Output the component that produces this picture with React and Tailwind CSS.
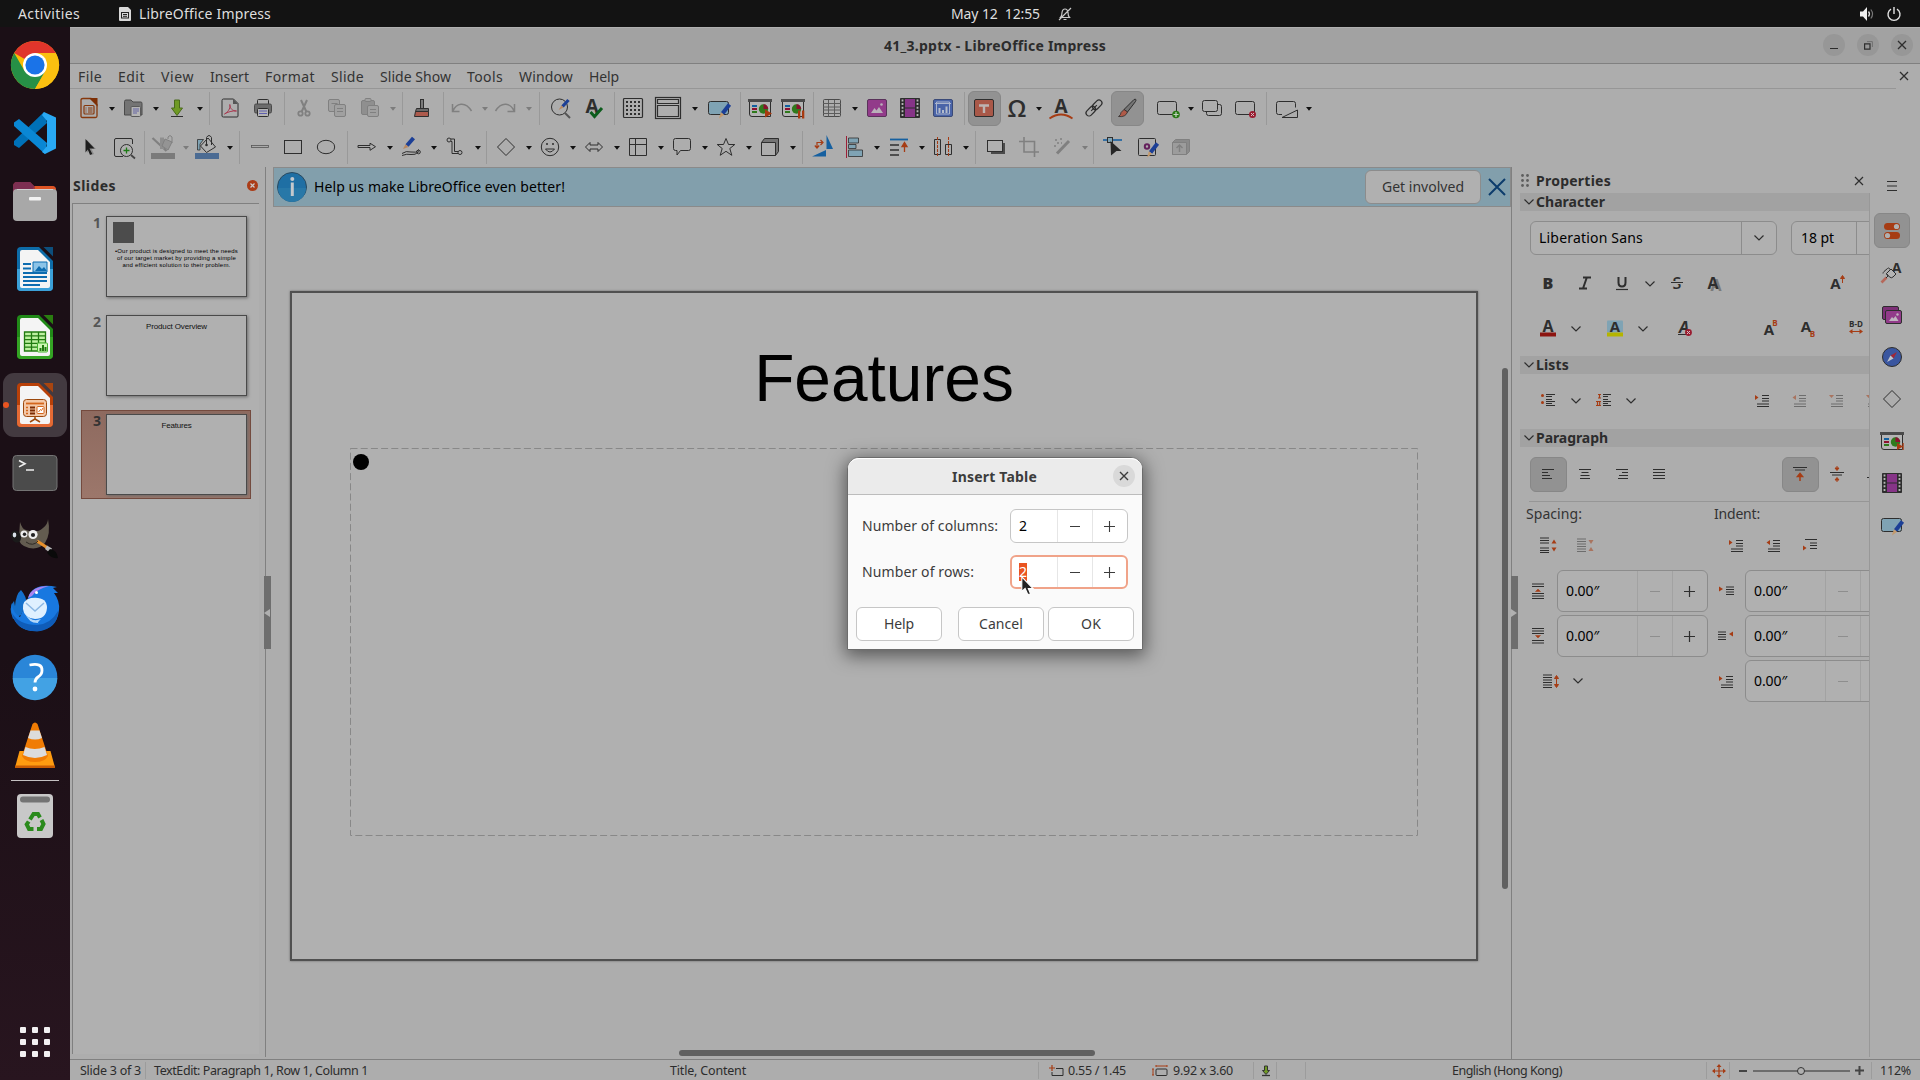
import React, { useLayoutEffect, useRef } from "react";

const K = "#2e2e2e";
const G = "#808080";
const O = "#a63c14";
const B = "#7fa3b4";

/* Single-line text tracked to fill an exact advance width. */
function Fit({ w, children, className = "" }) {
  const ref = useRef(null);
  useLayoutEffect(() => {
    const el = ref.current;
    el.style.letterSpacing = "0px";
    const natural = el.getBoundingClientRect().width;
    el.style.letterSpacing = (w - natural) / String(children).length + "px";
  }, [w, children]);
  return (
    <span className={"block shrink-0 whitespace-pre " + className} style={{ width: w }}>
      <span ref={ref} className="inline-block">{children}</span>
    </span>
  );
}

function Ic({ s = 24, w, h, children, className = "" }) {
  const ww = w || s;
  const hh = h || s;
  return (
    <svg width={ww} height={hh} viewBox={`0 0 ${ww} ${hh}`} fill="none" className={"block shrink-0 overflow-visible " + className}>
      {children}
    </svg>
  );
}

const Glyph = ({ x = 12, y = 18, size = 16, fill = K, children, ...p }) => (
  <text x={x} y={y} fontSize={size} fill={fill} fontWeight="700" textAnchor="middle" fontFamily="'Open Sans','Liberation Sans',sans-serif" {...p}>
    {children}
  </text>
);

const Pencil = ({ t }) => (
  <g transform={t}>
    <path d="M11 0 L4 9" stroke="#1c3f96" strokeWidth="4" />
    <path d="M2.4 7.8 L5.6 10.2 L0.5 14 Z" fill="#c49a6c" />
  </g>
);

const Show = ({ children }) => (
  <>
    <path d="M1.500 5V18q0 2.500 2.500 2.500H22.500V5" stroke={K} fill="#b4b4b4" />
    <path d="M0 3h24v3H0z" fill="#4a4a4a" />
    <path d="M4 9h5v2H4z" fill="#1260a0" />
    <path d="M4 12h5v2H4z" fill="#8c1030" />
    <path d="M4 15h5v2H4z" fill="#2f7a1c" />
    <circle cx="15.500" cy="13" r="4.700" fill="#2f7a1c" />
    <path d="M15.500 13V8.300A4.700 4.700 0 0 1 20.200 13Z" fill="#8c1030" />
    {children}
  </>
);

const film = (
  <>
    <path d="M2.500 2.500h19v19H2.500z" fill="#2c2c2c" stroke={K} />
    <path d="M7 3h10v8.400H7zM7 12.600h10V21H7z" fill="#863487" />
    <path d="M4.500 3.500v18M19.500 3.500v18" stroke="#b5b5b5" strokeWidth="1.800" strokeDasharray="2 1.600" />
  </>
);

const note = (
  <>
    <rect x="1.500" y="5.500" width="20" height="13" rx="2" fill={B} stroke={K} />
    <Pencil t="translate(11.500,8.500)" />
  </>
);

const ICONS = {
  new: (
    <>
      <path d="M6 2.500h8l6 6V20q0 1.500-1.500 1.500h-13Q4 21.500 4 20V4q0-1.500 2-1.500z" stroke="#86380c" strokeWidth="1.300" />
      <path d="M12 2h8.500v8.500z" fill="#7d2f05" />
      <rect x="7" y="9.500" width="10" height="8.500" rx="1" stroke="#86380c" strokeWidth="1.200" />
      <path d="M8.500 12h1M11 12h4.500M8.500 14h1M11 14h4.500M8.500 16h1M11 16h4.500" stroke="#86380c" />
    </>
  ),
  open: (
    <>
      <path d="M3.500 19V5.500q0-1.500 1.500-1.500h5l2 2h8q1 0 1 1.500V19z" fill="#747474" stroke="#4a4a4a" />
      <rect x="10" y="10.500" width="9.500" height="10" rx="1" fill="#b4b4b4" stroke="#5a5a5a" />
      <path d="M12 13h6M12 15h6M12 17h4" stroke="#6464a4" />
    </>
  ),
  save: (
    <>
      <path d="M9.500 4h5v8h3L12 19.500 6.500 12h3z" fill="#6f9a24" stroke="#4a6a1c" />
      <path d="M6 20.500h12" stroke={K} />
    </>
  ),
  pdf: (
    <>
      <path d="M5.500 3h10l4.500 4.500V20q0 1-1 1H5.500q-1.500 0-1.500-1V4.500Q4 3 5.500 3z" stroke={K} />
      <path d="M15 3l5 5h-5z" fill="#555" />
      <path d="M6.500 18c5-3 6-7 5.300-9.500 0 4 2.700 6.500 6.700 6.500-4-.5-9 1-12 3z" stroke="#a83a50" />
    </>
  ),
  print: (
    <>
      <path d="M6.500 8V4.500q0-1 1-1h9q1 0 1 1V8" stroke={K} />
      <rect x="3.500" y="8" width="17" height="9" rx="1.500" fill="#6c6c6c" stroke="#4a4a4a" />
      <rect x="6.500" y="12.500" width="11" height="8" rx="1" fill="#b4b4b4" stroke={K} />
      <path d="M8 15h8M8 17.500h8" stroke="#6060b0" />
    </>
  ),
  cut: (
    <>
      <path d="M9 4l5.500 12M15 4L9.500 16" stroke={G} strokeWidth="2" />
      <circle cx="8.500" cy="17.500" r="2.200" stroke={G} strokeWidth="1.800" />
      <circle cx="15.500" cy="17.500" r="2.200" stroke={G} strokeWidth="1.800" />
    </>
  ),
  copy: (
    <>
      <rect x="3.500" y="3.500" width="11" height="12" rx="1.500" fill="#a0a0a0" stroke={G} />
      <rect x="9.500" y="8.500" width="11" height="12" rx="1.500" fill="#a0a0a0" stroke={G} />
      <path d="M12 12.500h6M12 15.500h6M6.500 7.500h6" stroke={G} />
    </>
  ),
  paste: (
    <>
      <rect x="3.500" y="4.500" width="13" height="14" rx="1.500" fill="#8f8f8f" stroke={G} />
      <rect x="7" y="2.500" width="6" height="3" rx="1" fill="#a0a0a0" stroke={G} />
      <rect x="9.500" y="9.500" width="11" height="11" rx="1.500" fill="#a0a0a0" stroke={G} />
      <path d="M12 13.500h6M12 16.500h6" stroke={G} />
    </>
  ),
  clone: (
    <>
      <rect x="10.500" y="3.500" width="3" height="9" fill="#7a7a7a" stroke={K} />
      <path d="M6.500 12.500h12v3h-13z" fill="#6a6a6a" stroke={K} />
      <path d="M5.500 15.500h13v5H4.500z" fill="#ac5a4c" stroke={K} />
    </>
  ),
  undo: <path d="M2.500 8v7.500h7M3 15C6 7.500 15 4.500 21.500 15" stroke={G} strokeWidth="1.500" />,
  redo: <path d="M20.500 8v7.500h-7M20 15C17 7.500 8 4.500 1.500 15" stroke={G} strokeWidth="1.500" />,
  find: (
    <>
      <circle cx="11.500" cy="11" r="8" stroke={K} />
      <path d="M17 17l5 5" stroke="#555" strokeWidth="2" />
      <path d="M20.500 4l-6 6.500" stroke="#1c3f96" strokeWidth="3.200" />
      <path d="M15.500 11.500l-2-2-3 4.500z" fill="#b88860" />
    </>
  ),
  spell: (
    <>
      <Glyph x={10} y={17} size={19}>A</Glyph>
      <path d="M8.500 16l4 4.500 7.500-8.500" stroke="#0c5c1c" strokeWidth="3" />
    </>
  ),
  grid: (
    <>
      <rect x="2.500" y="2.500" width="19" height="19" rx="1" stroke={K} strokeWidth="1.200" />
      <path d="M5 6h14M5 10h14M5 14h14M5 18h14" stroke={K} strokeWidth="2" strokeDasharray="2 2" />
    </>
  ),
  master: (
    <>
      <rect x="-.5" y="1.500" width="25" height="21" stroke={K} strokeWidth="1.200" />
      <path d="M1.500 3.500h21V7.500h-21zM1.500 9.500h21v11h-21z" stroke={K} strokeWidth="1.200" />
    </>
  ),
  note,
  show: (
    <Show>
      <path d="M17 13.500l7 4-7 4z" fill="#a83a10" />
    </Show>
  ),
  show2: (
    <Show>
      <path d="M17 14.500h2.300v8H17zM21 14.500h2.300v8H21z" fill="#a83a10" />
    </Show>
  ),
  show3: (
    <Show>
      <path d="M17 14l6 3.500-6 3.500zM22.500 14h1.200v7h-1.200z" fill="#a83a10" />
    </Show>
  ),
  table: (
    <>
      <rect x="3.500" y="3.500" width="17" height="17" rx="1" stroke="#4a4a4a" />
      <path d="M3 7.500h18M3 11h18M3 14h18M3 17.500h18M8.500 4v16.500M14.500 4v16.500" stroke="#5c5c5c" />
    </>
  ),
  image: (
    <>
      <rect x="2.500" y="3.500" width="19" height="17" rx="1.500" fill="#923b8a" stroke="#59325a" />
      <path d="M6 17l3.500-5 2 2.500L14 11l4 6z" fill="#b9b0b9" />
      <circle cx="16.500" cy="8.500" r="1.300" fill="#b9b0b9" />
    </>
  ),
  film,
  chart: (
    <>
      <rect x="2.500" y="3.500" width="19" height="17" rx="1.500" fill="#4a64a8" stroke="#3a4a78" />
      <path d="M5.500 6v12h13V6zM4 7.500h16" stroke="#aab4cc" />
      <path d="M7.500 12h2v5h-2zM11 14h2v3h-2zM14.500 10.500h2V17h-2z" fill="#b4bccc" />
    </>
  ),
  textbox: (
    <>
      <rect x="2.500" y="3.500" width="19" height="17" rx="1.500" fill="#a95848" stroke="#2e2e2e" />
      <path d="M7 9.500h10M12 9v8" stroke="#bdb4b2" strokeWidth="2.400" />
    </>
  ),
  omega: <Glyph y={20.500} size={24} fontWeight="600">Ω</Glyph>,
  fontwork: (
    <>
      <Glyph y={17} size={19}>A</Glyph>
      <path d="M.5 22.500Q12 14.500 23.500 22.500" stroke={O} strokeWidth="1.800" />
    </>
  ),
  link: (
    <g transform="rotate(-45 12 12)" stroke={K}>
      <rect x="2" y="9" width="11" height="6" rx="3" strokeWidth="1.200" />
      <rect x="11" y="9" width="11" height="6" rx="3" strokeWidth="1.200" />
      <path d="M8 12h8" strokeWidth="1.200" />
    </g>
  ),
  draw: (
    <>
      <path d="M19 3.500q3-1 1.500 2L12.500 16 9 13.500z" fill="#747474" stroke={K} />
      <path d="M9 13.500l3.500 2.500q-2 5.500-9 4.500 2.500-1.500 2.500-4z" fill="#b05a48" stroke={K} strokeWidth=".8" />
    </>
  ),
  newslide: (
    <>
      <rect x="1.500" y="5.500" width="19" height="13" rx="2" stroke={K} />
      <circle cx="20" cy="18.500" r="3.800" fill="#2a7a18" />
      <path d="M17.500 18.500h5M20 16v5" stroke="#c4d4c0" strokeWidth="1.200" />
    </>
  ),
  dup: (
    <>
      <rect x="6.500" y="8.500" width="15" height="11" rx="2" stroke={K} />
      <rect x="2.500" y="4.500" width="15" height="11" rx="2" fill="#adadad" stroke={K} />
    </>
  ),
  del: (
    <>
      <rect x="2.500" y="5.500" width="19" height="13" rx="2" stroke={K} />
      <circle cx="19.500" cy="18.500" r="3.500" fill="#9a1c30" />
      <path d="M18 17l3 3M21 17l-3 3" stroke="#d4c0c4" />
    </>
  ),
  layout: (
    <>
      <path d="M8 18.500H4.500q-2 0-2-2V7.500q0-2 2-2h15q2 0 2 2v4" stroke={K} />
      <path d="M8 21.500L23.500 14v7.500z" stroke={K} />
    </>
  ),
  select: (
    <>
      <path d="M9 5l9 9h-4.500l2.500 5-2.500 1-2.200-5L9 18z" fill="#8c8c8c" />
      <path d="M7.500 4l9 9.500h-5l2.800 5.500-2.300 1-2.200-5.500-2.300 3z" fill="#1e1e1e" />
    </>
  ),
  zoom: (
    <>
      <path d="M20.500 9V5q0-1.500-1.500-1.500H4Q2.500 3.500 2.500 5v15q0 1.500 1.500 1.500h7" stroke={K} />
      <circle cx="14.500" cy="15.500" r="6" stroke={K} fill="#b0b0b0" />
      <path d="M19 20l4 3.500" stroke="#444" strokeWidth="1.800" />
      <path d="M11.500 15.500h6M14.500 12.500v6" stroke="#1c7a14" strokeWidth="1.300" />
    </>
  ),
  linecolor: (
    <>
      <path d="M1.500 3l14 13" stroke={G} strokeWidth="2.200" />
      <path d="M9 2.500h4V14H9z" fill="#8e8e8e" />
      <path d="M14 4l7 3-4 8-6-4z" fill="#949494" stroke={G} />
      <path d="M17 4V2q2-3 4 0v6" stroke={G} />
      <path d="M0 18h24v6H0z" fill="#7b7b7b" />
    </>
  ),
  fillcolor: (
    <>
      <path d="M2.500 15V4.500h6L5 9v6z" fill={B} stroke={K} strokeWidth=".8" />
      <path d="M13 3l7.500 9-9 5.500L5.500 11z" fill="#b0b0b0" stroke={K} />
      <path d="M11.500 9V2.500q2.500-4 5 0V10" stroke={K} />
      <circle cx="11.500" cy="10" r="1.300" fill={K} />
      <path d="M0 18h24v6H0z" fill="#4b6b93" />
    </>
  ),
  line: <rect x="3.500" y="10.500" width="17" height="2" stroke="#555" fill="#aaa" strokeWidth=".8" />,
  rect: <rect x="3.500" y="5.500" width="17" height="13" stroke={K} />,
  ellipse: <ellipse cx="12" cy="12" rx="8.700" ry="6.700" stroke={K} />,
  arrow: <path d="M3 10.500h12V8.200l5.500 3.500L15 15.300v-2.800H3z" stroke={K} />,
  pen: (
    <>
      <path d="M14.500 3L8 10.500" stroke="#1c3f96" strokeWidth="4" />
      <path d="M9.500 12L6.500 9.200 4 14z" fill="#b88860" />
      <path d="M3 18.500q4-3 9-1.500t8-2.500M3 20.500q5-2 9-1t8-3" stroke={K} />
      <circle cx="19.500" cy="17" r="1.800" stroke={K} />
    </>
  ),
  connector: (
    <>
      <circle cx="6" cy="5" r="2" stroke={K} />
      <circle cx="17" cy="17.500" r="2" stroke={K} />
      <path d="M8 4h3.500v12.500H15M8 6.500h1v12h6" stroke={K} />
    </>
  ),
  diamond: <path d="M12 3.500l8.500 8.500-8.500 8.500L3.500 12z" stroke={K} />,
  smiley: (
    <>
      <circle cx="12" cy="12" r="8.700" stroke={K} />
      <path d="M7.500 14q4.500 6 9 0z" stroke={K} />
      <circle cx="9" cy="9" r="1" fill={K} />
      <circle cx="15" cy="9" r="1" fill={K} />
    </>
  ),
  dbl: <path d="M3.500 12L8 7.500V10h8V7.500l4.500 4.500-4.500 4.500V14H8v2.500z" stroke={K} />,
  flow: <path d="M3.500 3.500h17v17h-17zM3.500 9.500h17M9.500 3.500v17" stroke={K} />,
  callout: <path d="M5.500 3.500h13q2 0 2 2v8q0 2-2 2h-8L7 20v-4.500H5.500q-2 0-2-2v-8q0-2 2-2z" stroke={K} />,
  star: <path d="M12 3.500l2.500 6h6.300l-5 4 2 6.800-5.800-4-5.800 4 2-6.800-5-4h6.300z" stroke={K} />,
  cube: (
    <>
      <path d="M3.500 7.500l3-4h14v13l-3 4z" fill="#747474" stroke={K} />
      <path d="M3.500 7.500h14v13h-14z" fill="#adadad" stroke={K} />
    </>
  ),
  rotate: (
    <>
      <path d="M15.500 0l6.500 14h-6.500zM1 21.500L15 15v6.500z" fill="#1660a0" />
      <path d="M6 12V7.500h5M9.500 5l2.500 2.500L9.500 10M3.800 10.500L6 13l2.200-2.500" stroke={O} strokeWidth="1.200" />
    </>
  ),
  align: (
    <>
      <path d="M3.500 1v22" stroke="#9c2038" />
      <path d="M5.500 3h10v5h-10zM5.500 9.500h7.500v4H5.500zM5.500 15h14v6.500h-14z" fill={B} stroke={K} strokeWidth=".8" />
    </>
  ),
  arrange: (
    <>
      <path d="M3 4.500h18" stroke="#1660a0" strokeWidth="1.800" />
      <path d="M3 10h9M3 15h9M3 20h9" stroke="#4e4e4e" strokeWidth="2" />
      <path d="M17.500 17v-7M15 11.500l2.500-4 2.500 4z" stroke={O} fill={O} strokeWidth="1.300" />
    </>
  ),
  dist: (
    <>
      <path d="M3.500 4.500h6v15h-6zM14.500 9.500h6v10h-6z" stroke={K} />
      <path d="M6.500 2v20M17.500 2v20" stroke={O} strokeDasharray="3 1" />
    </>
  ),
  shadow: (
    <>
      <path d="M7 8h14v11H7z" fill="#4a4a4a" />
      <rect x="3.500" y="5.500" width="15" height="11" fill="#b0b0b0" stroke={K} />
    </>
  ),
  crop: <path d="M7 2v15h15M2 6.500h15.500V22" stroke={G} strokeWidth="1.600" />,
  filter: (
    <>
      <path d="M19 6L7 18.500" stroke={G} strokeWidth="3" />
      <path d="M5 5h2M10 4h2M7 8h2M4 11h2M11 8h1" stroke={G} strokeWidth="1.500" />
    </>
  ),
  points: (
    <>
      <path d="M2 5h19" stroke="#1660a0" strokeWidth="1.600" />
      <rect x="6.500" y="2.500" width="5" height="5" fill={B} stroke={K} />
      <path d="M9.500 6l11 10h-5l-5.500 4.500z" fill="#262626" />
    </>
  ),
  glue: (
    <>
      <rect x="2.500" y="3.500" width="17" height="17" rx="1" stroke={K} />
      <circle cx="11" cy="11.500" r="2.200" stroke="#64205c" strokeWidth="2" />
      <Pencil t="translate(10.500,8.500)" />
    </>
  ),
  extrude: (
    <>
      <path d="M3.500 7.500l3-3h14v12l-3 3h-14z" fill="#8a8a8a" stroke={G} />
      <path d="M3.500 7.500h14v12h-14z" fill="#9c9c9c" stroke={G} />
      <path d="M10.500 17v-6M7.500 13l3-3 3 3" stroke={G} strokeWidth="1.500" />
    </>
  ),
  /* sidebar */
  bold: <Glyph y={18} size={16} fontWeight="800">B</Glyph>,
  italic: <path d="M10 6.500h8M6 17.500h8M14 6l-4 11.500" stroke={K} strokeWidth="2" />,
  underline: (
    <>
      <path d="M8.500 6v5.500q0 4 3.500 4t3.500-4V6" stroke={K} strokeWidth="2" />
      <path d="M6 18.500h12" stroke={K} strokeWidth="1.200" />
    </>
  ),
  strike: (
    <>
      <Glyph y={17.500} size={16} fontWeight="600">S</Glyph>
      <path d="M6 11.500h12" stroke="#adadad" strokeWidth="3" />
      <path d="M6 11.500h12" stroke={K} />
    </>
  ),
  ashadow: (
    <>
      <Glyph x={14} y={19.500} size={16} fill="#7a7a7a">A</Glyph>
      <Glyph x={11} y={17.500} size={16}>A</Glyph>
    </>
  ),
  grow: (
    <>
      <Glyph x={10.500} y={18} size={15}>A</Glyph>
      <path d="M17.500 12V6M15.500 7.500l2-3 2 3z" stroke={O} fill={O} />
    </>
  ),
  shrink: <path d="M10.500 18l4-10 4 10M12 14.500h5" stroke={K} strokeWidth="2.200" />,
  fcolor: (
    <>
      <Glyph y={16} size={16}>A</Glyph>
      <path d="M4 16.500h16v4H4z" fill="#8c1410" />
    </>
  ),
  hl: (
    <>
      <rect x="4" y="4.500" width="16" height="12" rx="1" fill={B} />
      <Glyph y={16} size={15}>A</Glyph>
      <path d="M4 16.500h16v4H4z" fill="#b4b400" />
    </>
  ),
  clear: (
    <>
      <Glyph x={11} y={16.500} size={16} fontStyle="italic">A</Glyph>
      <path d="M5 18.500h10" stroke={K} />
      <circle cx="15.500" cy="16.500" r="3.400" fill="#9a1c30" />
      <path d="M14 15l3 3M17 15l-3 3" stroke="#d4c0c4" />
    </>
  ),
  sup: (
    <>
      <Glyph x={11} y={18.500} size={15}>A</Glyph>
      <Glyph x={17} y={9.500} size={8} fill={O}>B</Glyph>
    </>
  ),
  sub: (
    <>
      <Glyph x={11} y={16} size={15}>A</Glyph>
      <Glyph x={17.500} y={20.500} size={8} fill={O}>B</Glyph>
    </>
  ),
  kern: (
    <>
      <Glyph x={12} y={11} size={8}>B-D</Glyph>
      <path d="M6 15.500h12" stroke={O} />
      <path d="M8.500 13v5L5 15.500zM15.500 13v5l3.500-2.500z" fill={O} />
    </>
  ),
  bullets: (
    <>
      <circle cx="6.500" cy="7.500" r="1.500" fill={O} />
      <circle cx="6.500" cy="14.500" r="1.500" fill={O} />
      <path d="M10 6.500h9M10 8.500h6M10 11.500h6M10 13.500h9M10 15.500h6M10 17.500h9" stroke={K} />
    </>
  ),
  numbers: (
    <>
      <path d="M7 6.500h3M8.500 6.500v3.500M7 10h3M5 13.500h5M6.500 13.500v4M8.700 13.500v4M5 17.500h5" stroke={O} strokeWidth="1.200" />
      <path d="M12 6.500h8M12 8.500h5M12 11.500h5M12 13.500h8M12 15.500h5M12 17.500h8" stroke={K} />
    </>
  ),
  ind1: (
    <>
      <path d="M5 7v5l3.500-2.500z" fill={O} />
      <path d="M12 7.500h7M12 10.500h7M12 13h7M7 16h12M7 18.500h12" stroke={K} strokeWidth="1.200" />
    </>
  ),
  ind2: (
    <>
      <path d="M9 7v5L5.500 9.500z" fill={O} />
      <path d="M12 7.500h7M12 10.500h7M12 13h7M7 16h12M7 18.500h12" stroke={K} strokeWidth="1.200" />
    </>
  ),
  ind3: (
    <>
      <path d="M5 7h5L7.500 10z" fill={O} />
      <path d="M12 7.500h7M12 10.500h7M12 13h7M7 16h12M7 18.500h12" stroke={K} strokeWidth="1.200" />
    </>
  ),
  hang: (
    <>
      <path d="M5 12.500v5L8.500 15z" fill={O} />
      <path d="M7 6.500h12M12 10h7M12 12.500h7M12 15.500h7" stroke={K} strokeWidth="1.200" />
    </>
  ),
  al: <path d="M6 7.500h12M6 10.500h6M6 13.500h8M6 16.500h10" stroke={K} strokeWidth="1.200" />,
  ac: <path d="M6 7.500h12M8.500 10.500h7M7.500 13.500h9M7 16.500h10" stroke={K} strokeWidth="1.200" />,
  ar: <path d="M6 7.500h12M12 10.500h6M9 13.500h9M8 16.500h10" stroke={K} strokeWidth="1.200" />,
  aj: <path d="M6 7.500h12M6 10.500h12M6 13.500h12M6 16.500h12" stroke={K} strokeWidth="1.200" />,
  vt: (
    <>
      <path d="M5 5.500h14M7 8h10" stroke={K} strokeWidth="1.200" />
      <path d="M12 19v-5M9.500 14.500l2.500-3 2.500 3z" stroke={O} fill={O} strokeWidth="1.500" />
    </>
  ),
  vc: (
    <>
      <path d="M5 10.500h14M7 13h10" stroke={K} strokeWidth="1.200" />
      <path d="M12 4v2M10 6l2 2.500L14 6zM12 20v-2M10 18l2-2.500 2 2.500z" stroke={O} fill={O} />
    </>
  ),
  vb: <path d="M5 15.500h14M7 18h10" stroke={K} strokeWidth="1.200" />,
  spInc: (
    <>
      <path d="M4 5h9M4 7.500h9M4 10h9M4 15h9M4 17.500h9M4 19.500h9" stroke={K} strokeWidth="1.200" />
      <path d="M15.500 10.500L18 6.500l2.500 4zM15.500 14.500l2.500 4 2.500-4z" fill={O} />
    </>
  ),
  spDec: (
    <>
      <path d="M4 6h9M4 8.500h9M4 11h9M4 13.500h9M4 16h9M4 18.500h9" stroke={K} strokeWidth="1.200" />
      <path d="M15.500 7L18 11l2.500-4zM15.500 18l2.500-4 2.500 4z" fill={O} />
    </>
  ),
  above: (
    <>
      <path d="M6 5h12M6 7.500h12M6 14.500h12M6 17h12M6 19.500h12" stroke={K} strokeWidth="1.200" />
      <path d="M9.500 12.500L12 10l2.500 2.500z" fill={O} stroke={O} strokeWidth=".5" />
    </>
  ),
  below: (
    <>
      <path d="M6 4.500h12M6 7h12M6 9.500h12M6 16.500h12M6 19h12" stroke={K} strokeWidth="1.200" />
      <path d="M9.500 11.500L12 14l2.500-2.500z" fill={O} stroke={O} strokeWidth=".5" />
    </>
  ),
  before: (
    <>
      <path d="M5 7.500v5L9 10z" fill={O} />
      <path d="M12 8h8M12 10.500h8M12 13h8M12 15.500h8" stroke={K} strokeWidth="1.200" />
    </>
  ),
  after: (
    <>
      <path d="M19 7.500v5L15 10z" fill={O} />
      <path d="M4 8h8M4 10.500h8M4 13h8M4 15.500h8" stroke={K} strokeWidth="1.200" />
    </>
  ),
  linesp: (
    <>
      <path d="M3 6h9M3 8.500h9M3 11h9M3 13.500h9M3 16h9M3 18.500h9" stroke={K} strokeWidth="1.200" />
      <path d="M16.500 8v8M14.500 9.500l2-3 2 3zM14.500 15.500l2 3 2-3z" stroke={O} fill={O} />
    </>
  ),
  /* tab bar */
  hamburger: <path d="M7 7.500h10M7 12h10M7 16.500h10" stroke={K} strokeWidth="1.200" />,
  toggles: (
    <>
      <rect x="4" y="4" width="16" height="7" rx="3.500" fill={O} />
      <rect x="4" y="13" width="16" height="7" rx="3.500" fill={O} />
      <circle cx="16.500" cy="7.500" r="2.600" fill="#b0b0b0" />
      <circle cx="7.500" cy="16.500" r="2.600" fill="#b0b0b0" />
    </>
  ),
  styles: (
    <>
      <Glyph x={16.500} y={12} size={14}>A</Glyph>
      <path d="M1.500 21.500l5-5" stroke="#b5685a" strokeWidth="2.600" />
      <path d="M3 12.500q0-1 1-2l3.500-3q1-1 2 0L10.500 9 6.500 13l1.500 2-2 2" stroke={K} />
      <path d="M6.500 12.500l4.500-4.500 5 5-3 3q-1.500 1.500-3.500 0z" stroke={K} fill="#b4b4b4" />
    </>
  ),
  gallery: (
    <>
      <rect x="2.500" y="3.500" width="16" height="13" rx="1.500" fill="#7c3076" stroke={K} />
      <rect x="5.500" y="7.500" width="16" height="13" rx="1.500" fill="#923b8a" stroke={K} />
      <path d="M9 18l3-4 1.500 1.500L15.500 13l3 5z" fill="#c0b4c0" />
      <circle cx="17.500" cy="11.500" r="1.200" fill="#c0b4c0" />
    </>
  ),
  nav: (
    <>
      <circle cx="12" cy="12" r="9.500" fill="#3a56a0" stroke={K} />
      <path d="M17 7l-3.500 6.500-3-3z" fill="#a02838" />
      <path d="M7 17l3.500-6.500 3 3z" fill="#c0c4cc" />
    </>
  ),
  film2: film,
};

const Item = ({ n, w = "w-[33px]", on, dim }) => (
  <div className={"flex h-[35px] shrink-0 items-center justify-center pb-px pr-px " + w + (on ? " rounded-md border border-[#878787] bg-[#929292]" : "") + (dim ? " opacity-50" : "")}>
    <Ic>{ICONS[n]}</Ic>
  </div>
);

const Drop = ({ w = "w-[11px]", dim }) => (
  <div className={"flex shrink-0 justify-center pt-px " + w}>
    <Ic w={6} h={4}>
      <path d="M0 0h6L3 3.800z" fill={dim ? "#7c7c7c" : "#111"} />
    </Ic>
  </div>
);

const Sep = ({ w = "w-2" }) => (
  <div className={"flex shrink-0 justify-center " + w}>
    <div className="h-[33px] w-px bg-[#999999]" />
  </div>
);

const Chev = ({ w = "w-[18px]" }) => (
  <div className={"flex shrink-0 justify-center " + w}>
    <Ic w={10} h={6}>
      <path d="M.5.5L5 5 9.500.5" stroke="#2e2e2e" strokeWidth="1.200" />
    </Ic>
  </div>
);

const X = ({ s = 8, c = K, sw = 1.3 }) => (
  <Ic s={s}>
    <path d={`M0 0L${s} ${s}M${s} 0L0 ${s}`} stroke={c} strokeWidth={sw} />
  </Ic>
);

/* ---------- dock ---------- */

const Doc = ({ c1, c2, fold, children }) => (
  <>
    <path d="M10 2h18l14 14v26q0 4-4 4H10q-4 0-4-4V6q0-4 4-4z" fill={c1} />
    <path d="M6 24h36v18q0 4-4 4H10q-4 0-4-4z" fill={c2} />
    <path d="M11 5h16l12 12v24q0 2-2 2H11q-2 0-2-2V7q0-2 2-2z" fill="#f4f4f4" />
    <path d="M32.500 2H42v9.500z" fill={fold} />
    {children}
  </>
);

const DOCK = [
  <>
    <circle cx="24" cy="24" r="24" fill="#fbbc05" />
    <path d="M24 24L3.200 12A24 24 0 0 1 44.800 12H24z" fill="#e0352b" />
    <path d="M3.200 12A24 24 0 0 0 24 48L34.400 30 24 24 13.600 30z" fill="#269046" />
    <path d="M24 12h20.800A24 24 0 0 1 24 48l10.400-18z" fill="#fbc010" />
    <circle cx="24" cy="24" r="12" fill="#fff" />
    <circle cx="24" cy="24" r="9.600" fill="#1a73e8" />
  </>,
  <>
    <path d="M33 3L3 32l0 4 5 3L36 14z" fill="#0071b8" />
    <path d="M3 13.500l5-3.500L36 34l-2 11L3 17z" fill="#0a87d4" />
    <path d="M33 3l12 5.500v31L34 45l-3-2 5-6V12l-5-6z" fill="#29a9f4" />
  </>,
  <>
    <path d="M2 10q0-5 4-5h13l4 4h18q4 0 4 4v12H2z" fill="#a53a3a" />
    <path d="M24 9h17q4 0 4 4v8H24z" fill="#dd5424" />
    <path d="M2 10q0-5 4-5h13l4 4-3 8H2z" fill="#7d2f52" />
    <rect x="2" y="12" width="44" height="32" rx="4" fill="#a8a8a8" />
    <path d="M6 12.500h36" stroke="#d0d0d0" />
    <rect x="18" y="20" width="12" height="3.500" rx="1" fill="#f2f2f2" />
  </>,
  <Doc c1="#0d6ca8" c2="#3ba0d8" fold="#0d4f7c">
    <path d="M12 19h8M12 23.500h8M12 28h24M12 32h24M12 36h24M12 40h17" stroke="#0d6cb0" strokeWidth="1.800" />
    <path d="M22 17h14v10H22z" fill="#8cc4e8" stroke="#0d6cb0" />
    <path d="M24 26l4-5 3 3 2-2 3 4z" fill="#0d6cb0" />
  </Doc>,
  <Doc c1="#218a18" c2="#34a424" fold="#2a7d10">
    <path d="M13.500 19h21v19h-21z" fill="#bdf0a0" stroke="#207a10" strokeWidth="1.300" />
    <path d="M13.500 22.800h21M13.500 26.600h21M13.500 30.400h21M13.500 34.200h21M20.500 19v19M27.500 19v19" stroke="#207a10" strokeWidth="1.300" />
    <rect x="26.500" y="30" width="10" height="9" rx="1" fill="#cdf5b4" stroke="#43b42c" />
    <path d="M28.500 38v-3h2v3zM31 38v-6h2v6zM33.500 38v-4h2v4z" fill="#207a10" />
  </Doc>,
  <Doc c1="#b84008" c2="#e46a34" fold="#a84510">
    <rect x="12.500" y="18.500" width="23" height="17" rx="3" fill="#f3c8a8" stroke="#9c480c" />
    <path d="M15 22.500h18" stroke="#d4661c" strokeWidth="1.800" />
    <path d="M15 26.500h2M15 29.500h2M15 32.500h2" stroke="#d4661c" strokeWidth="1.500" />
    <path d="M19 26.500h5M19 29.500h5M19 32.500h5" stroke="#7c2c04" strokeWidth="2" />
    <rect x="26" y="25.500" width="7" height="7" rx="1" fill="#fff" stroke="#d4661c" />
    <path d="M27.500 31l2-2.500 1 1 1.500-2.500" stroke="#d4661c" />
    <path d="M24 36v2l-5 3M24 38l5 3" stroke="#9c480c" strokeWidth="1.500" />
  </Doc>,
  <>
    <rect x="2" y="6.500" width="44" height="35" rx="3.500" fill="#4b4b4b" stroke="#747474" />
    <path d="M8 11.500l6 3.200-6 3.200M15 21h8" stroke="#eee" strokeWidth="1.600" />
  </>,
  <>
    <path d="M9 5q2 7 6 8 11 4 17-2 5-4 5-9 3 15-3 24-6 7-16 5Q7 28 8 20z" fill="#635c50" />
    <ellipse cx="5" cy="19.500" rx="4.800" ry="6.300" fill="#1a1a1a" transform="rotate(-25 5 19.500)" />
    <ellipse cx="3.500" cy="18" rx="1.800" ry="2.400" fill="#d8e0e8" />
    <circle cx="13" cy="17" r="3.500" fill="#eee" />
    <circle cx="22" cy="17.500" r="4.600" fill="#eee" />
    <circle cx="13.500" cy="17.200" r="1.700" fill="#222" />
    <circle cx="22" cy="18" r="2.100" fill="#222" />
    <path d="M26 24l10 6.500" stroke="#e8912c" strokeWidth="3" />
    <path d="M36 28.500l5 3-2.500 4-4.500-3.500z" fill="#b8b8b8" />
    <path d="M39 32q7 1 8 9-7 1-11-5.500z" fill="#0a0a0a" />
    <path d="M15 25q7 5 12-1" stroke="#2e2a24" />
  </>,
  <>
    <path d="M10 5q6 7 5 13l-5 12L2 34Q-3 22 3 16l1 5Q5 9 10 5z" fill="#1470cc" />
    <path d="M17 13Q22-3 46 2l-4 1 5 5-4 0q6 8 5 17Q46 45 24 46 4 46 .5 26 0 22 .5 18 2 28 9 32z" fill="#1878e0" />
    <path d="M1 28Q8 40 26 40q14-1 21-14Q47 44 26 46.500 5 46 1 28z" fill="#0f5cb8" />
    <path d="M17 13Q20 1 38 1 26 4 21 11z" fill="#a884f0" />
    <path d="M12 24q-1-9 8-11 16-2 16 10-1 11-12 11-11-1-12-10z" fill="#dff0ff" />
    <path d="M15 18l9 8 9-8" stroke="#8cb8e4" strokeWidth="1.500" />
    <circle cx="25.500" cy="7.500" r="1.500" fill="#fff" />
    <path d="M14 28q6 10 16 6-5 5-2 4-10 1-14-10z" fill="#b4d8f8" />
  </>,
  <>
    <circle cx="24" cy="24" r="22.300" fill="#2a86d8" />
    <path d="M1.700 25a22.300 22.300 0 0 0 44.600 0z" fill="#42a2e4" />
    <path d="M18.500 12q13-2.500 12.500 5.500 0 4-4 6.500-3 2-3 5.500" stroke="#fff" strokeWidth="2.800" />
    <circle cx="24" cy="36" r="2.400" fill="#fff" />
  </>,
  <>
    <path d="M8.500 30h31L44 46.500H4z" fill="#ff9c10" />
    <path d="M4.300 44.500h39.400l.3 2.500H4z" fill="#c85c04" />
    <path d="M11 35L21.500 3q2.500-3 5 0L37 35q-3 6-13 6t-13-6z" fill="#f07c04" />
    <path d="M19.500 9.500h9L31 17q-7 3-14 0zM14.500 26q9 4 19 0l2.500 8q-12 6-24 0z" fill="#dcdcdc" />
  </>,
];

const Trash = (
  <>
    <rect x="6" y="2" width="36" height="44" rx="4" fill="#c8c8c8" />
    <rect x="9" y="4.500" width="30" height="6" rx="3" fill="#747474" />
    <g stroke="#2a8a1c" strokeWidth="4">
      <path d="M19 27.500l3.500-5.500h4.500l2 3.500" />
      <path d="M30.500 28l2 4-2.500 5h-4" />
      <path d="M22.500 37h-4.500l-2.300-4.500 2-3" />
    </g>
  </>
);

const DockSlot = ({ children, active }) => (
  <div className="relative flex h-[68px] w-[70px] shrink-0 items-center justify-center">
    {active && <div className="absolute left-[3px] top-0.5 h-16 w-16 rounded-[11px] bg-[#433a40]" />}
    {active && <div className="absolute left-[3px] top-[31px] size-1.5 rounded-full bg-[#e95420]" />}
    <Ic s={48} className="relative">{children}</Ic>
  </div>
);

/* ---------- sidebar parts ---------- */

const Section = ({ label, w }) => (
  <div className="flex h-[18px] w-[350px] shrink-0 items-center bg-[#a2a2a2] pl-px">
    <Chev w="w-[15px]" />
    <Fit w={w} className="font-bold text-[#2c2c2c]">{label}</Fit>
  </div>
);

const PI = ({ n, on, dim, w = "w-[37px]" }) => <Item n={n} on={on} dim={dim} w={w} />;

const Spin = () => (
  <div className="flex h-[42px] w-[151px] shrink-0 items-center rounded-md border border-[#8c8c8c] bg-[#b0b0b0] text-black">
    <div className="w-[79px] pl-2"><Fit w={33}>0.00″</Fit></div>
    <div className="flex h-full w-[35px] items-center justify-center border-l border-[#a2a2a2]">
      <div className="h-px w-[10px] bg-[#8e8e8e]" />
    </div>
    <div className="flex h-full flex-1 items-center justify-center border-l border-[#a2a2a2] pr-px">
      <Ic s={11}><path d="M0 5.500h11M5.500 0v11" stroke={K} strokeWidth="1.200" /></Ic>
    </div>
  </div>
);

const DlgSpin = ({ focus, children }) => (
  <div className={"flex h-[34px] w-[118px] items-center rounded-md bg-white " + (focus ? "border-2 border-[#f0a389]" : "border border-[#c6c6c6]")}>
    <div className={"h-full flex-1 " + (focus ? "pl-[7px]" : "pl-2")}>
      <div className="flex h-full items-center">{children}</div>
    </div>
    <div className="flex h-full w-[35px] items-center justify-center border-l border-[#e6e6e6]">
      <div className="h-px w-[10px] bg-[#3c3c3c]" />
    </div>
    <div className={"flex h-full items-center justify-center border-l border-[#e6e6e6] " + (focus ? "w-[34px]" : "w-[35px] pr-[2px]")}>
      <Ic s={11}><path d="M0 5.500h11M5.500 0v11" stroke="#3c3c3c" strokeWidth="1.100" /></Ic>
    </div>
  </div>
);

const DlgBtn = ({ w, children, className = "" }) => (
  <div className={"flex h-[34px] w-[86px] shrink-0 items-center justify-center rounded-md border border-[#c6c6c6] bg-white text-[#3c3c3c] " + className}>
    <Fit w={w}>{children}</Fit>
  </div>
);

const Thumb = ({ n, dark, children }) => (
  <div className={"flex h-[89px] w-[170px] shrink-0 border pt-[3px] " + (dark ? "border-[#744a3e] bg-[#94705f] bg-gradient-to-b from-[#8e6a5f] to-[#9c776b]" : "border-transparent")}>
    <Fit w={9} className={"ml-[11px] -mt-px text-[14px] font-bold leading-[16px] " + (dark ? "text-[#333]" : "text-[#555]")}>{n}</Fit>
    <div className="ml-[4px] h-[81px] w-[141px] border border-[#4a4a4a] bg-[#b0b0b0] shadow-[1px_1px_3px_#6c6c6c]" style={{ fontFamily: "'Liberation Sans',sans-serif" }}>
      {children}
    </div>
  </div>
);

const MENUS = [["File", 24], ["Edit", 27], ["View", 33], ["Insert", 39], ["Format", 50], ["Slide", 33], ["Slide Show", 71], ["Tools", 36], ["Window", 54], ["Help", 30]];

const StatSep = ({ className = "" }) => <div className={"h-[17px] w-px shrink-0 bg-[#9c9c9c] " + className} />;

export default function App() {
  return (
    <div className="relative flex h-[1080px] w-[1920px] flex-col overflow-hidden bg-[#adadad] text-[14px] leading-[18px] text-[#333333]" style={{ fontFamily: "'Noto Sans','Open Sans',sans-serif" }}>
      {/* top bar */}
      <header className="flex h-[27px] shrink-0 items-center bg-[#131313] text-[#dedede]">
        <Fit w={62} className="ml-[18px]">Activities</Fit>
        <Ic w={12} h={14} className="ml-[39px]">
          <path d="M1 0h8l3 3v10q0 1-1 1H1q-1 0-1-1V1q0-1 1-1z" fill="#d8d8d8" />
          <rect x="2.500" y="5.500" width="7" height="5.500" stroke="#222" />
          <path d="M4 7.500h4M4 9.300h4" stroke="#222" />
        </Ic>
        <Fit w={132} className="ml-2">LibreOffice Impress</Fit>
        <Fit w={89} className="ml-[680px]">May 12  12:55</Fit>
        <Ic s={14} className="ml-[18px]">
          <path d="M2.500 10.500h9q-1.500-1.500-1.500-5Q9.500 2 7 2T4 5.500q0 3.500-1.500 5zM5.500 12.500h3M1 13L13 1" stroke="#c8c8c8" strokeWidth="1.200" />
        </Ic>
        <Ic w={16} h={14} className="ml-[787px]">
          <path d="M1 4.500h3L8 0v14L4 9.500H1z" fill="#eee" />
          <path d="M9.500 4.500q2 2.500 0 5" stroke="#ddd" strokeWidth="1.300" />
          <path d="M11.800 2.500q3.500 4.500 0 9" stroke="#777" strokeWidth="1.200" />
        </Ic>
        <Ic s={14} className="ml-3">
          <path d="M4 2.200a6 6 0 1 0 6 0M7 0v7" stroke="#e4e4e4" strokeWidth="1.400" />
        </Ic>
      </header>

      <div className="flex min-h-0 flex-1">
        {/* dock */}
        <nav className="flex w-[70px] shrink-0 flex-col bg-[#1b0f16] bg-gradient-to-b from-[#1b0f16] from-60% to-[#28151f] pt-1">
          {DOCK.map((d, i) => (
            <DockSlot key={i} active={i === 5}>{d}</DockSlot>
          ))}
          <div className="ml-[11px] mt-px h-px w-12 shrink-0 bg-[#c4c0c2]" />
          <div className="mt-px"><DockSlot>{Trash}</DockSlot></div>
          <div className="mb-[23px] ml-5 mt-auto grid w-[30px] grid-cols-3 gap-1.5">
            {[...Array(9)].map((_, i) => (
              <div key={i} className="size-1.5 rounded-[1px] bg-[#f2f0f1]" />
            ))}
          </div>
        </nav>

        <main className="flex w-[1850px] flex-col">
          {/* title bar */}
          <div className="flex h-[37px] shrink-0 items-center border-b border-t border-b-[#808080] border-t-[#b0b0b0] bg-[#a2a2a2]">
            <Fit w={222} className="ml-[814px] font-bold text-[#2c2c2c]">41_3.pptx - LibreOffice Impress</Fit>
            <div className="ml-[717px] flex gap-3 pb-px">
              <div className="flex size-[22px] items-center justify-center rounded-full bg-[#979797]">
                <div className="mt-1.5 h-px w-2 bg-[#2c2c2c]" />
              </div>
              <div className="flex size-[22px] items-center justify-center rounded-full bg-[#979797]">
                <Ic s={9}>
                  <path d="M.6 2.800h5.400v5.400H.6z" stroke={K} strokeWidth="1.200" />
                  <path d="M3 .6h5.400V6" stroke="#6c6c6c" strokeWidth=".9" />
                </Ic>
              </div>
              <div className="flex size-[22px] items-center justify-center rounded-full bg-[#979797]">
                <X />
              </div>
            </div>
          </div>
          {/* menu bar */}
          <div className="flex h-[25px] shrink-0 items-center">
            <div className="flex h-full w-[1826px] items-center gap-4 border-b border-[#969696] pl-2 pt-[2px]">
              {MENUS.map(([m, w]) => (
                <Fit key={m} w={w}>{m}</Fit>
              ))}
            </div>
            <div className="ml-1 pb-px"><X /></div>
          </div>
          {/* standard toolbar */}
          <div className="flex h-[39px] shrink-0 items-center pl-[3px]">
            <Item n="new" /><Drop /><Item n="open" /><Drop /><Item n="save" /><Drop /><Sep w="w-[9px]" />
            <Item n="pdf" /><Item n="print" /><Sep />
            <Item n="cut" /><Item n="copy" /><Item n="paste" /><Drop dim /><Sep />
            <Item n="clone" /><Sep />
            <Item n="undo" w="w-[31px]" /><Drop dim w="w-[13px]" /><Item n="redo" w="w-[31px]" /><Drop dim w="w-[13px]" /><Sep />
            <Item n="find" w="w-[35px]" /><Item n="spell" /><Sep w="w-[6px]" />
            <Item n="grid" /><Item n="master" w="w-[37px]" /><Drop w="w-4" /><Item n="note" /><Sep />
            <Item n="show" /><Item n="show2" /><Sep w="w-[6px]" />
            <Item n="table" /><Drop w="w-3" /><Item n="image" /><Item n="film" /><Item n="chart" /><Sep />
            <Item n="textbox" on /><Item n="omega" w="w-8" /><Drop w="w-3" /><Item n="fontwork" /><Item n="link" />
            <Item n="draw" on /><div className="w-2" />
            <Item n="newslide" /><Drop /><Item n="dup" /><Item n="del" /><Sep />
            <Item n="layout" /><Drop />
          </div>
          {/* drawing toolbar */}
          <div className="flex h-[39px] shrink-0 items-center pl-[3px]">
            <Item n="select" w="w-[35px]" /><Item n="zoom" /><Sep w="w-[6px]" />
            <Item n="linecolor" /><Drop dim /><Item n="fillcolor" /><Drop /><Sep w="w-[9px]" />
            <Item n="line" /><Item n="rect" /><Item n="ellipse" /><Sep />
            <Item n="arrow" /><Drop /><Item n="pen" /><Drop /><Item n="connector" /><Drop /><Sep w="w-[7px]" />
            <Item n="diamond" /><Drop /><Item n="smiley" /><Drop /><Item n="dbl" /><Drop /><Item n="flow" /><Drop />
            <Item n="callout" /><Drop /><Item n="star" /><Drop /><Item n="cube" /><Drop /><Sep w="w-[9px]" />
            <Item n="rotate" /><Item n="align" w="w-[31px]" /><Drop w="w-3" /><Item n="arrange" /><Drop /><Item n="dist" /><Drop /><Sep w="w-[9px]" />
            <Item n="shadow" /><Item n="crop" /><Item n="filter" /><Drop dim /><Sep w="w-[7px]" />
            <Item n="points" /><div className="w-0.5" /><Item n="glue" /><Item n="extrude" />
          </div>

          <div className="flex h-[892px] shrink-0">
            {/* slide list */}
            <section className="flex w-[195px] shrink-0 flex-col">
              <div className="flex h-9 shrink-0 items-center pl-[3px]">
                <Fit w={43} className="pt-[2px] font-bold text-[#2c2c2c]">Slides</Fit>
                <Ic s={11} className="ml-[131px]">
                  <circle cx="5.500" cy="5.500" r="5.500" fill="#ab3c17" />
                  <path d="M3.500 3.500l4 4M7.500 3.500l-4 4" stroke="#ccc" strokeWidth="1.200" />
                </Ic>
              </div>
              <div className="ml-0.5 flex h-[851px] w-[187px] shrink-0 flex-col gap-[10px] border-l border-t border-[#808080] bg-[#b0b0b0] pl-2 pt-[8px]">
                <Thumb n="1">
                  <div className="ml-[6px] mt-[5px] size-[21px] bg-[#4c4c4c]" />
                  <div className="mt-[5px] flex flex-col items-center text-[6px] leading-[7px] text-black">
                    <Fit w={123}>•Our product is designed to meet the needs</Fit>
                    <Fit w={119}>of our target market by providing a simple</Fit>
                    <Fit w={108}>and efficient solution to their problem.</Fit>
                  </div>
                </Thumb>
                <Thumb n="2">
                  <div className="flex justify-center pt-[5px] text-[8px] leading-[11px] text-[#111]"><Fit w={61}>Product Overview</Fit></div>
                </Thumb>
                <Thumb n="3" dark>
                  <div className="flex justify-center pt-[5px] text-[8px] leading-[11px] text-[#111]"><Fit w={30}>Features</Fit></div>
                </Thumb>
              </div>
            </section>
            <div className="relative w-2 shrink-0">
              <div className="h-[890px] w-px bg-[#808080]" />
              <div className="absolute -left-px top-[409px] flex h-[73px] w-[7px] items-center bg-[#6e6e6e]">
                <Ic w={6} h={8}><path d="M6 0v8L0 4z" fill="#b0b0b0" /></Ic>
              </div>
            </div>
            {/* workspace */}
            <section className="flex w-[1238px] shrink-0 flex-col">
              <div className="flex h-10 shrink-0 items-center border border-[#8a8a8a] bg-[#829fac] text-black">
                <Ic s={30} className="ml-[3px]">
                  <circle cx="15" cy="15" r="14.500" fill="#1f6fa4" stroke="#2a4a60" />
                  <path d="M1 16a14 14 0 0 0 28 0z" fill="#2878a8" />
                  <circle cx="15.300" cy="7" r="2" fill="#c4c8cc" />
                  <path d="M15.300 10.500V24" stroke="#c4c8cc" strokeWidth="3" />
                </Ic>
                <Fit w={251} className="ml-[7px]">Help us make LibreOffice even better!</Fit>
                <div className="ml-[800px] flex h-[34px] w-[116px] items-center justify-center rounded-md border border-[#8c8c8c] bg-[#b0b0b0] text-[#333]">
                  <Fit w={82}>Get involved</Fit>
                </div>
                <div className="ml-2"><X s={16} c="#0c3c6c" sw={2} /></div>
              </div>
              <div className="relative h-[843px] shrink-0">
                <div className="ml-[17px] mt-[84px] flex h-[670px] w-[1188px] flex-col items-center border-2 border-[#505050] bg-[#b0b0b0] shadow-[0_0_2px_#666]">
                  <div className="mt-[47px] h-[74px] text-[65.800px] leading-[76px] text-black" style={{ fontFamily: "'Liberation Sans',sans-serif" }}>Features</div>
                  <div className="relative mt-[34px] h-[388px] w-[1068px]">
                    <svg width="1068" height="388" className="absolute left-0 top-0">
                      <rect x=".5" y=".5" width="1067" height="387" fill="none" stroke="#888" strokeDasharray="7 3.200" />
                    </svg>
                    <div className="ml-[3px] mt-[6px] size-4 rounded-full bg-black" />
                  </div>
                </div>
                <div className="absolute right-[3px] top-[161px] h-[521px] w-1.5 rounded-full bg-[#606060]" />
              </div>
              <div className="ml-[406px] h-1.5 w-[416px] shrink-0 rounded-full bg-[#606060]" />
            </section>
            {/* properties */}
            <div className="relative w-[9px] shrink-0">
              <div className="h-[892px] w-px bg-[#808080]" />
              <div className="absolute left-0 top-[409px] flex h-[73px] w-[7px] items-center bg-[#6e6e6e]">
                <Ic w={6} h={8}><path d="M0 0v8l6-4z" fill="#b0b0b0" /></Ic>
              </div>
            </div>
            <section className="flex w-[349px] shrink-0 flex-col overflow-hidden">
              <div className="flex h-[26px] shrink-0 items-center pl-px pt-0.5">
                <Ic w={8} h={14}>
                  {[1.5, 6.5, 11.5].map((y) => (
                    <g key={y} fill="#5e5e5e">
                      <circle cx="1.500" cy={y} r="1.400" />
                      <circle cx="6.500" cy={y} r="1.400" />
                    </g>
                  ))}
                </Ic>
                <Fit w={75} className="ml-[7px] font-bold text-[#2c2c2c]">Properties</Fit>
                <div className="ml-[244px]"><X s={8} sw={1.2} /></div>
              </div>
              <Section label="Character" w={69} />
              <div className="ml-[10px] mt-[10px] flex h-[34px] shrink-0 text-black">
                <div className="flex h-full w-[247px] shrink-0 items-center rounded-md border border-[#8c8c8c] bg-[#b0b0b0] pl-2">
                  <Fit w={104}>Liberation Sans</Fit>
                  <div className="ml-[98px] h-full w-px bg-[#8c8c8c]" />
                  <Chev w="w-[34px]" />
                </div>
                <div className="ml-[14px] flex h-full w-[100px] shrink-0 items-center rounded-md border border-[#8c8c8c] bg-[#b0b0b0] pl-[9px]">
                  <Fit w={33}>18 pt</Fit>
                  <div className="ml-[22px] h-full w-px bg-[#8c8c8c]" />
                </div>
              </div>
              <div className="ml-[10px] mt-[11px] flex shrink-0 items-center">
                <PI n="bold" /><PI n="italic" /><PI n="underline" /><Chev /><PI n="strike" /><PI n="ashadow" />
                <div className="ml-[86px] flex shrink-0"><PI n="grow" /><PI n="shrink" /></div>
              </div>
              <div className="ml-[10px] mt-[10px] flex shrink-0 items-center">
                <PI n="fcolor" /><Chev /><div className="w-3 shrink-0" /><PI n="hl" /><Chev /><PI n="clear" w="w-[67px]" />
                <div className="ml-[33px] flex shrink-0"><PI n="sup" /><PI n="sub" /><PI n="kern" w="w-[61px]" /></div>
              </div>
              <div className="mt-[10px]"><Section label="Lists" w={33} /></div>
              <div className="ml-[10px] mt-[9px] flex shrink-0 items-center">
                <PI n="bullets" /><Chev /><PI n="numbers" /><Chev />
                <div className="ml-[104px] flex shrink-0"><PI n="ind1" /><PI n="ind2" dim /><PI n="ind3" dim /><PI n="ind3" dim /></div>
              </div>
              <div className="mt-[11px]"><Section label="Paragraph" w={72} /></div>
              <div className="ml-[10px] mt-[10px] flex shrink-0 items-center">
                <PI n="al" on /><PI n="ac" /><PI n="ar" /><PI n="aj" />
                <div className="ml-[104px] flex shrink-0"><PI n="vt" on /><PI n="vc" /><PI n="vb" /></div>
              </div>
              <div className="ml-[9px] mt-[9px] h-px shrink-0 bg-[#969696]" />
              <div className="mt-[3px] flex shrink-0 pl-[6px]">
                <Fit w={56}>Spacing:</Fit>
                <Fit w={46} className="ml-[132px]">Indent:</Fit>
              </div>
              <div className="ml-[10px] mt-[5px] flex shrink-0 items-center">
                <PI n="spInc" /><PI n="spDec" dim />
                <div className="ml-[114px] flex shrink-0"><PI n="ind1" /><PI n="ind2" /><PI n="hang" /></div>
              </div>
              <div className="mt-[7px] flex shrink-0 flex-col gap-[3px]">
                {[["above", "before"], ["below", "after"]].map(([a, b]) => (
                  <div key={a} className="flex items-center">
                    <PI n={a} w="w-[37px]" /><Spin /><PI n={b} w="w-[37px]" /><Spin />
                  </div>
                ))}
                <div className="flex items-center">
                  <div className="ml-[14px] flex w-[174px] shrink-0 items-center"><PI n="linesp" /><Chev w="w-[14px]" /></div>
                  <PI n="ind1" w="w-[37px]" /><Spin />
                </div>
              </div>
            </section>
            {/* tab bar */}
            <aside className="flex w-[51px] shrink-0 flex-col items-center">
              <div className="flex h-[46px] items-center self-center pb-2 pr-[5px]"><Ic>{ICONS.hamburger}</Ic></div>
              <div className="-mt-[20px] h-[864px] w-full border-l border-[#989898]">
                <div className="flex flex-col items-center gap-[7px] pr-[6px] pt-[20px]">
                  <div className="flex h-[35px] w-9 items-center justify-center rounded-md border border-[#878787] bg-[#929292]"><Ic>{ICONS.toggles}</Ic></div>
                  {["styles", "gallery", "nav", "diamond", "show3", "film2", "note"].map((n) => (
                    <div key={n} className="flex h-[35px] w-9 items-center justify-center"><Ic>{ICONS[n]}</Ic></div>
                  ))}
                </div>
              </div>
            </aside>
          </div>

          {/* status bar */}
          <footer className="flex h-[21px] shrink-0 items-center border-t border-[#808080] pt-px text-[12.5px] text-[#2c2c2c]">
            <Fit w={61} className="ml-[10px]">Slide 3 of 3</Fit>
            <StatSep className="ml-1" />
            <Fit w={214} className="ml-2">TextEdit: Paragraph 1, Row 1, Column 1</Fit>
            <Fit w={76} className="ml-[302px]">Title, Content</Fit>
            <StatSep className="ml-[292px]" />
            <Ic w={15} h={12} className="ml-[10px]">
              <path d="M0 3h6M3 0v6" stroke={O} strokeWidth="1.200" />
              <path d="M7 3.500h7v7H3V7" stroke={K} />
            </Ic>
            <Fit w={58} className="ml-1">0.55 / 1.45</Fit>
            <Ic w={16} h={12} className="ml-[26px]">
              <path d="M4 1h11M4 0v2M15 0v2M1 4v6M0 4h2M0 10h2" stroke={O} />
              <rect x="4" y="4" width="11" height="6.500" rx="1" stroke={K} />
            </Ic>
            <Fit w={60} className="ml-[5px]">9.92 x 3.60</Fit>
            <StatSep className="ml-[20px]" />
            <Ic w={10} h={12} className="ml-[7px]">
              <path d="M3.500 1h3v4.500H8.500L5 9.500 1.500 5.500h2z" fill="#6f9a24" stroke="#333" />
              <path d="M1 10.500h8" stroke="#333" strokeWidth="1.300" />
            </Ic>
            <StatSep className="ml-[5px]" />
            <StatSep className="ml-[28px]" />
            <Fit w={110} className="ml-[146px]">English (Hong Kong)</Fit>
            <StatSep className="ml-[144px]" />
            <Ic s={14} className="ml-[5px]">
              <path d="M7 2v10M2 7h10" stroke={O} strokeWidth="1.200" />
              <path d="M4.500 3L7 0l2.500 3zM4.500 11L7 14l2.500-3zM3 4.500L0 7l3 2.500zM11 4.500L14 7l-3 2.500z" fill={O} />
            </Ic>
            <StatSep className="ml-[3px]" />
            <div className="ml-[9px] h-0.5 w-2 bg-[#444]" />
            <div className="relative ml-1.5 h-0.5 w-[97px] bg-[#6c6c6c]">
              <div className="absolute left-[44px] top-[-3px] size-2 rounded-full border border-[#333] bg-[#b0b0b0]" />
            </div>
            <Ic s={9} className="ml-[5px]"><path d="M0 4.500h9M4.500 0v9" stroke="#444" strokeWidth="2" /></Ic>
            <StatSep className="ml-[7px]" />
            <Fit w={31} className="ml-2">112%</Fit>
          </footer>
        </main>
      </div>

      {/* insert table dialog */}
      <div className="absolute left-[847px] top-[457px] flex h-[193px] w-[296px] flex-col overflow-visible rounded-t-[12px] border border-[#6c6c6c] bg-[#fafafa] text-[#3c3c3c] shadow-[0_4px_18px_2px_rgba(0,0,0,0.5)]">
        <div className="flex h-[37px] shrink-0 items-center rounded-t-[11px] border-b border-t border-b-[#bcbcbc] border-t-white bg-[#ebebeb]">
          <Fit w={85} className="ml-[104px] font-bold">Insert Table</Fit>
          <div className="mb-px ml-[76px] flex size-[22px] items-center justify-center rounded-full bg-[#d9d9d9]">
            <X s={8} c="#3c3c3c" sw={1.4} />
          </div>
        </div>
        <div className="mt-[14px] flex shrink-0 items-center justify-between pl-[14px] pr-[14px]">
          <Fit w={136}>Number of columns:</Fit>
          <DlgSpin><Fit w={8} className="text-black">2</Fit></DlgSpin>
        </div>
        <div className="mt-[12px] flex shrink-0 items-center justify-between pl-[14px] pr-[14px]">
          <Fit w={112}>Number of rows:</Fit>
          <DlgSpin focus><Fit w={8} className="bg-[#e95420] text-white">2</Fit></DlgSpin>
        </div>
        <div className="mt-[18px] flex shrink-0 pl-2">
          <DlgBtn w={30}>Help</DlgBtn>
          <DlgBtn w={44} className="ml-4">Cancel</DlgBtn>
          <DlgBtn w={20} className="ml-1">OK</DlgBtn>
        </div>
        <Ic w={13} h={20} className="absolute left-[173px] top-[118px]">
          <path d="M.8.800v14.500l3.300-2.800 2.400 5.300q1 1.200 3 0l-2.200-5.300h4.700z" fill="#222" stroke="#fff" strokeWidth="1.100" />
        </Ic>
      </div>
    </div>
  );
}
